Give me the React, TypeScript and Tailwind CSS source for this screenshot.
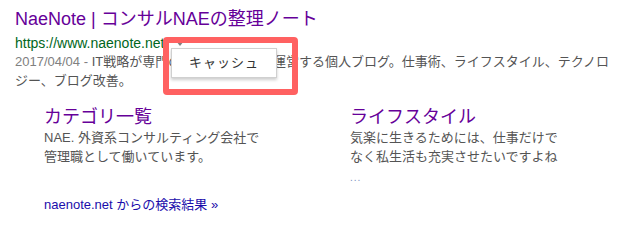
import React from "react";

const font = "font-['Liberation_Sans','Noto_Sans_CJK_JP',sans-serif]";

export default function App() {
  return (
    <div className={`relative w-[623px] h-[225px] bg-white ${font}`}>
      <div className="pl-[15px] pt-[8px]">
        {/* Title */}
        <a className="block text-[18px] leading-[22px] text-[#660099]">
          NaeNote | コンサルNAEの整理ノート
        </a>

        {/* URL */}
        <div className="mt-[5px] flex items-center text-[14px] leading-[16px] text-[#006621]">
          <span>https://www.naenote.net/</span>
          <span className="ml-[8px] inline-block border-x-[4px] border-t-[5px] border-x-transparent border-t-[#808080]" />
        </div>

        {/* Snippet */}
        <p className="mt-[1px] text-[13px] leading-[19px] text-[#545454]">
          <span className="text-[#808080]">2017/04/04 - </span>
          IT戦略が専門のコンサルNAEが運営する個人ブログ。仕事術、ライフスタイル、テクノロ
          <br />
          ジー、ブログ改善。
        </p>

        {/* Sitelinks */}
        <div className="mt-[16px] pl-[29px] grid grid-cols-[306px_1fr]">
          <div>
            <a className="block text-[18px] leading-[22px] text-[#660099]">カテゴリ一覧</a>
            <p className="text-[13px] leading-[19px] text-[#545454]">
              NAE. 外資系コンサルティング会社で
              <br />
              管理職として働いています。
            </p>
          </div>
          <div>
            <a className="block text-[18px] leading-[22px] text-[#660099]">ライフスタイル</a>
            <p className="text-[13px] leading-[19px] text-[#545454]">
              気楽に生きるためには、仕事だけで
              <br />
              なく私生活も充実させたいですよね
            </p>
            <div className="mt-[6px] text-[10px] leading-[12px] tracking-[1px] text-[#7b8fc0]">...</div>
          </div>
        </div>

        {/* More results */}
        <div className="mt-[12px] pl-[29px] text-[13px] leading-[18px] text-[#1a0dab]">
          naenote.net からの検索結果 »
        </div>
      </div>

      {/* Cache popup */}
      <div className="absolute left-[171px] top-[48px] w-[106px] h-[30px] flex items-center justify-center bg-white border border-[#d0d0d0] shadow-[0_2px_3px_rgba(0,0,0,0.2)] text-[13px] text-[#333] tracking-[1px]">
        キャッシュ
      </div>

      {/* Highlight frame */}
      <div className="absolute left-[163px] top-[37px] w-[135px] h-[58px] border-[6px] border-[#ff6161] rounded-[4px]" />
    </div>
  );
}
